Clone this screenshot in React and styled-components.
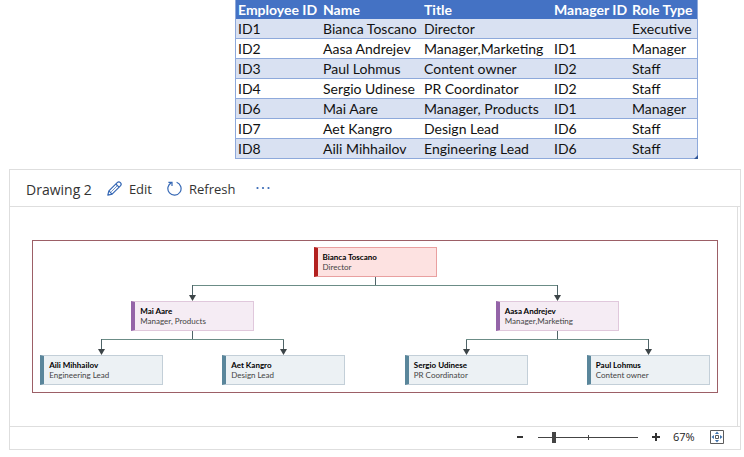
import React, { useState } from 'react';
import styled, { createGlobalStyle, css } from 'styled-components';

const GlobalStyle = createGlobalStyle`
  * {
    box-sizing: border-box;
  }

  body {
    margin: 0;
    background: #fff;
    font-family: 'Open Sans', 'Noto Sans', sans-serif;
    color: #333;
  }

  button {
    border: 0;
    padding: 0;
    background: none;
    font: inherit;
    color: inherit;
    cursor: pointer;
  }
`;

const employees = [
  { id: 'ID1', name: 'Bianca Toscano', title: 'Director', manager: '', role: 'Executive' },
  { id: 'ID2', name: 'Aasa Andrejev', title: 'Manager,Marketing', manager: 'ID1', role: 'Manager' },
  { id: 'ID3', name: 'Paul Lohmus', title: 'Content owner', manager: 'ID2', role: 'Staff' },
  { id: 'ID4', name: 'Sergio Udinese', title: 'PR Coordinator', manager: 'ID2', role: 'Staff' },
  { id: 'ID6', name: 'Mai Aare', title: 'Manager, Products', manager: 'ID1', role: 'Manager' },
  { id: 'ID7', name: 'Aet Kangro', title: 'Design Lead', manager: 'ID6', role: 'Staff' },
  { id: 'ID8', name: 'Aili Mihhailov', title: 'Engineering Lead', manager: 'ID6', role: 'Staff' },
];

const roleColors = {
  Executive: { bar: '#b3201f', fill: '#fde2e1', line: '#e9a0a0' },
  Manager: { bar: '#9464a8', fill: '#f5ecf4', line: '#e0c8dc' },
  Staff: { bar: '#5a869b', fill: '#ecf1f4', line: '#c3cfd8' },
};

const Page = styled.main`
  display: flex;
  flex-direction: column;
  gap: 10px;
`;

const SheetWrap = styled.div`
  position: relative;
  align-self: flex-end;
  margin-right: 46px;
`;

const Sheet = styled.table`
  border-collapse: separate;
  border-spacing: 0;
  table-layout: fixed;
  width: 463px;
  border: 1px solid #8ea9db;
  border-width: 0 1px;
  font-family: Lato, sans-serif;
  font-size: 14px;
  line-height: 19px;
  color: #111;
`;

const Col = styled.col`
  width: ${(props) => props.$width}px;
`;

const HeadCell = styled.th`
  height: 19px;
  padding: 0 0 0 2px;
  background: #4472c4;
  color: #fff;
  font-weight: 700;
  text-align: left;
  white-space: nowrap;
`;

const Row = styled.tr`
  &:nth-child(odd) {
    background: #d9e1f2;
  }
`;

const Cell = styled.td`
  height: 20px;
  padding: 0 0 0 2px;
  border-bottom: 1px solid #8ea9db;
  white-space: nowrap;
`;

const ResizeCorner = styled.span`
  position: absolute;
  right: 0;
  bottom: 0;
  border: 2px solid #2f5597;
  border-top-color: transparent;
  border-left-color: transparent;
`;

const Viewer = styled.section`
  margin: 0 3px 0 9px;
  border: 1px solid #dedede;
`;

const Toolbar = styled.header`
  display: flex;
  align-items: center;
  gap: 15px;
  height: 37px;
  padding: 2px 16px 0;
  border-bottom: 1px solid #dedede;
`;

const DrawingTitle = styled.h1`
  margin: 0;
  font-size: 14px;
  font-weight: 400;
`;

const ToolButton = styled.button`
  display: flex;
  align-items: center;
  gap: 7px;
  font-size: 13px;

  svg {
    margin-bottom: 2px;
  }
`;

const MoreButton = styled(ToolButton)`
  padding: 0 6px;
`;

const Canvas = styled.div`
  margin-right: 2px;
  padding: 33px 19px 33px 22px;
  border-right: 1px solid #dedede;
`;

const Frame = styled.div`
  padding: 6px 7px 7px;
  border: 1px solid #9c5f66;
`;

const Branch = styled.div`
  display: flex;
  flex: 1;
  flex-direction: column;
  align-items: center;
  min-width: 0;
`;

const NodeCard = styled.div`
  width: 123px;
  height: 30px;
  padding: 4px 0 0 5px;
  border: 1px solid ${(props) => props.$colors.line};
  border-left: 4px solid ${(props) => props.$colors.bar};
  background: ${(props) => props.$colors.fill};
  font-family: Lato, sans-serif;
  font-size: 8px;
  line-height: 10px;
  color: #444;
  white-space: nowrap;
`;

const NodeName = styled.div`
  font-weight: 700;
  color: #000;
`;

const Stem = styled.div`
  width: 1px;
  height: 8px;
  background: #4f6468;
`;

const Reports = styled.div`
  display: flex;
  gap: 59px;
  width: 100%;
`;

// the horizontal line runs from each report to the middle of the gap
const Drop = styled.div`
  position: relative;
  display: flex;
  justify-content: center;
  width: 100%;
  height: 16px;

  &::before {
    content: '';
    position: absolute;
    top: 0;
    height: 1px;
    background: #6b8c86;
    ${(props) =>
      props.$first
        ? css`
            left: 50%;
            right: -30px;
          `
        : css`
            left: -30px;
            right: 50%;
          `}
  }
`;

const StatusBar = styled.footer`
  display: flex;
  align-items: center;
  justify-content: flex-end;
  height: 23px;
  padding: 0 16px 2px 0;
  border-top: 1px solid #dedede;
`;

const ZoomButton = styled.button`
  display: flex;
`;

const SliderWrap = styled.div`
  display: flex;
  width: 100px;
  margin: 0 14px;
`;

const Slider = styled.input`
  appearance: none;
  width: 100%;
  height: 11px;
  margin: 0;
  background:
    linear-gradient(#444, #444) center / 1px 5px no-repeat,
    linear-gradient(#444, #444) center / 100% 1px no-repeat;

  &::-webkit-slider-thumb {
    appearance: none;
    width: 4px;
    height: 11px;
    background: #444;
  }
`;

const ZoomValue = styled.output`
  width: 24px;
  margin: 0 13px;
  font-size: 11px;
  line-height: 16px;
  color: #222;
`;

const PencilIcon = () => (
  <svg width="15" height="15" viewBox="0 0 15 15" fill="none" stroke="#3668b5" strokeWidth="1.2" strokeLinejoin="round">
    <path d="M0.8 14.2 1.9 9.9 10.2 1.6a2.2 2.2 0 0 1 3.2 3.2L5.1 13.1Z" />
    <path d="M1.9 9.9 5.1 13.1M8.8 3l3.2 3.2" />
    <path d="M4.2 10.8 10 5" strokeWidth="0.7" />
  </svg>
);

const RefreshIcon = () => (
  <svg width="15" height="15" viewBox="0 0 15 15" fill="none" stroke="#3668b5" strokeWidth="1.2">
    <path d="M9.6 1.3A6.6 6.6 0 1 1 4.6 1.6" />
    <path d="M1.4 1.3h3.6v3.6" />
  </svg>
);

const DotsIcon = () => (
  <svg width="14" height="4" viewBox="0 0 14 4" fill="#3668b5">
    <circle cx="1.5" cy="2" r="1.1" />
    <circle cx="7" cy="2" r="1.1" />
    <circle cx="12.5" cy="2" r="1.1" />
  </svg>
);

const ArrowIcon = () => (
  <svg width="7" height="16" viewBox="0 0 7 16">
    <path d="M3 0h1v11H3z" fill="#4f6468" />
    <path d="M0 10h7L3.5 16Z" fill="#3d4548" />
  </svg>
);

const MinusIcon = () => (
  <svg width="8" height="8" viewBox="0 0 8 8">
    <path d="M1 3h6v2H1z" fill="#333" />
  </svg>
);

const PlusIcon = () => (
  <svg width="8" height="8" viewBox="0 0 8 8">
    <path d="M0 3h3V0h2v3h3v2H5v3H3V5H0z" fill="#333" />
  </svg>
);

const FitIcon = () => (
  <svg width="14" height="14" viewBox="0 0 14 14">
    <path d="M0.5 0.5h13v13h-13zM5.5 5.5h3v3h-3z" fill="none" stroke="#5c5c5c" />
    <path d="M7 1.5 9 4H5zM7 12.5 5 10h4zM1.5 7 4 5v4zM12.5 7 10 9V5z" fill="#3f73ad" />
  </svg>
);

const OrgNode = ({ person }) => {
  const reports = employees.filter((e) => e.manager === person.id).reverse();

  return (
    <Branch>
      <NodeCard $colors={roleColors[person.role]}>
        <NodeName>{person.name}</NodeName>
        <div>{person.title}</div>
      </NodeCard>
      {reports.length > 0 && (
        <>
          <Stem />
          <Reports>
            {reports.map((report, index) => (
              <Branch key={report.id}>
                <Drop $first={index === 0}>
                  <ArrowIcon />
                </Drop>
                <OrgNode person={report} />
              </Branch>
            ))}
          </Reports>
        </>
      )}
    </Branch>
  );
};

const EmployeeTable = () => (
  <SheetWrap>
    <Sheet>
      <colgroup>
        <Col $width={85} />
        <Col $width={101} />
        <Col $width={130} />
        <Col $width={78} />
        <Col $width={67} />
      </colgroup>
      <thead>
        <tr>
          <HeadCell>Employee ID</HeadCell>
          <HeadCell>Name</HeadCell>
          <HeadCell>Title</HeadCell>
          <HeadCell>Manager ID</HeadCell>
          <HeadCell>Role Type</HeadCell>
        </tr>
      </thead>
      <tbody>
        {employees.map((e) => (
          <Row key={e.id}>
            <Cell>{e.id}</Cell>
            <Cell>{e.name}</Cell>
            <Cell>{e.title}</Cell>
            <Cell>{e.manager}</Cell>
            <Cell>{e.role}</Cell>
          </Row>
        ))}
      </tbody>
    </Sheet>
    <ResizeCorner />
  </SheetWrap>
);

const App = () => {
  const [zoom, setZoom] = useState(67);

  return (
    <Page>
      <GlobalStyle />
      <EmployeeTable />
      <Viewer>
        <Toolbar>
          <DrawingTitle>Drawing 2</DrawingTitle>
          <ToolButton type="button">
            <PencilIcon />
            Edit
          </ToolButton>
          <ToolButton type="button">
            <RefreshIcon />
            Refresh
          </ToolButton>
          <MoreButton type="button" aria-label="More">
            <DotsIcon />
          </MoreButton>
        </Toolbar>
        <Canvas>
          <Frame>
            <OrgNode person={employees[0]} />
          </Frame>
        </Canvas>
        <StatusBar>
          <ZoomButton type="button" aria-label="Zoom out" onClick={() => setZoom(Math.max(10, zoom - 10))}>
            <MinusIcon />
          </ZoomButton>
          <SliderWrap>
            <Slider
              type="range"
              aria-label="Zoom"
              min="10"
              max="400"
              value={zoom}
              onChange={(event) => setZoom(Number(event.target.value))}
            />
          </SliderWrap>
          <ZoomButton type="button" aria-label="Zoom in" onClick={() => setZoom(Math.min(400, zoom + 10))}>
            <PlusIcon />
          </ZoomButton>
          <ZoomValue>{zoom}%</ZoomValue>
          <ZoomButton type="button" aria-label="Fit to window">
            <FitIcon />
          </ZoomButton>
        </StatusBar>
      </Viewer>
    </Page>
  );
};

export default App;
